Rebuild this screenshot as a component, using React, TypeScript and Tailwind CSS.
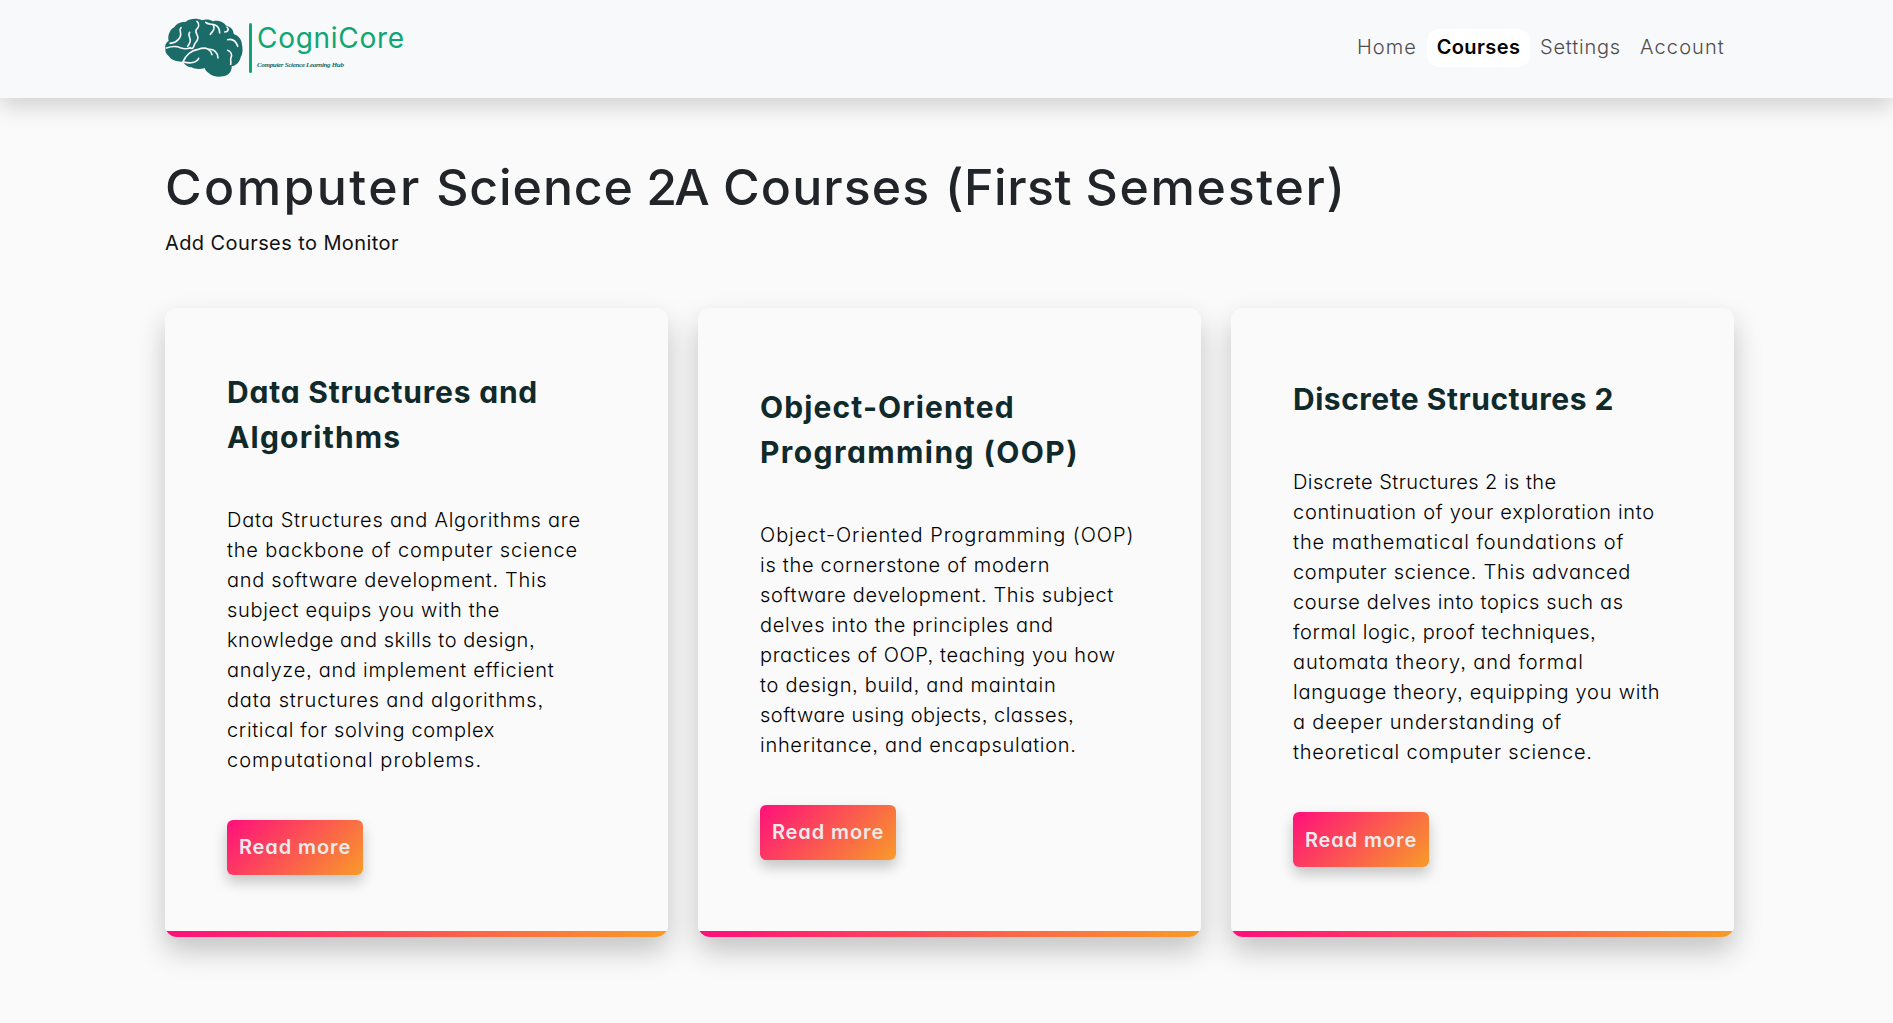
const FONT = "[font-family:Inter,'Open_Sans',sans-serif] [font-feature-settings:'cv11','ss03']";

type Line = { text: string; track: string };
type Course = { title: Line[]; body: Line[] };

const courses: Course[] = [
  {
    title: [
      { text: 'Data Structures and', track: 'tracking-[0.8px]' },
      { text: 'Algorithms', track: 'tracking-[1.2px]' },
    ],
    body: [
      { text: 'Data Structures and Algorithms are', track: 'tracking-[0.76px]' },
      { text: 'the backbone of computer science', track: 'tracking-[0.81px]' },
      { text: 'and software development. This', track: 'tracking-[0.67px]' },
      { text: 'subject equips you with the', track: 'tracking-[0.67px]' },
      { text: 'knowledge and skills to design,', track: 'tracking-[0.54px]' },
      { text: 'analyze, and implement efficient', track: 'tracking-[0.73px]' },
      { text: 'data structures and algorithms,', track: 'tracking-[0.82px]' },
      { text: 'critical for solving complex', track: 'tracking-[0.66px]' },
      { text: 'computational problems.', track: 'tracking-[1.04px]' },
    ],
  },
  {
    title: [
      { text: 'Object-Oriented', track: 'tracking-[1.12px]' },
      { text: 'Programming (OOP)', track: 'tracking-[1.43px]' },
    ],
    body: [
      { text: 'Object-Oriented Programming (OOP)', track: 'tracking-[0.95px]' },
      { text: 'is the cornerstone of modern', track: 'tracking-[0.72px]' },
      { text: 'software development. This subject', track: 'tracking-[0.65px]' },
      { text: 'delves into the principles and', track: 'tracking-[0.69px]' },
      { text: 'practices of OOP, teaching you how', track: 'tracking-[0.6px]' },
      { text: 'to design, build, and maintain', track: 'tracking-[0.71px]' },
      { text: 'software using objects, classes,', track: 'tracking-[0.5px]' },
      { text: 'inheritance, and encapsulation.', track: 'tracking-[0.72px]' },
    ],
  },
  {
    title: [{ text: 'Discrete Structures 2', track: 'tracking-[0.51px]' }],
    body: [
      { text: 'Discrete Structures 2 is the', track: 'tracking-[0.46px]' },
      { text: 'continuation of your exploration into', track: 'tracking-[0.71px]' },
      { text: 'the mathematical foundations of', track: 'tracking-[0.94px]' },
      { text: 'computer science. This advanced', track: 'tracking-[0.69px]' },
      { text: 'course delves into topics such as', track: 'tracking-[0.61px]' },
      { text: 'formal logic, proof techniques,', track: 'tracking-[0.61px]' },
      { text: 'automata theory, and formal', track: 'tracking-[0.92px]' },
      { text: 'language theory, equipping you with', track: 'tracking-[0.76px]' },
      { text: 'a deeper understanding of', track: 'tracking-[0.82px]' },
      { text: 'theoretical computer science.', track: 'tracking-[0.81px]' },
    ],
  },
];

function Brain() {
  return (
    <svg viewBox="30 31 234 180" className="h-[60px] w-[78px]" aria-hidden="true">
      <path
        fill="#1b6b68"
        d="M31 122C29 112 34 104 41 100C37 85 44 66 58 59C64 47 80 42 91 43C104 32 128 31 141 38C152 34 166 36 174 41C190 36 208 44 213 54C226 56 236 66 236 79C250 83 261 96 261 112C264 124 263 140 257 148C255 162 244 174 230 176C231 192 220 204 204 206C188 210 170 205 162 197C154 192 151 187 149 181C136 186 118 184 110 179C98 178 88 171 85 162C66 163 48 157 41 145C33 140 30 130 31 122Z"
      />
      <g fill="none" stroke="#f8f9fb" strokeWidth="4.8" strokeLinecap="round">
        <path d="M45 107C66 106 81 88 76 72C74 67 75 63 78 60" />
        <path d="M34 121C52 115 64 115 76 120C87 124 98 124 106 120" />
        <path d="M104 74C96 84 110 92 105 103C103 109 101 112 98 116" />
        <path d="M126 41C136 50 130 60 124 66C117 74 132 82 128 94C126 103 118 106 117 115C115 121 110 123 106 122" />
        <path d="M152 44C160 52 170 48 180 52C190 56 194 65 194 76" />
        <path d="M166 80C170 73 177 70 177 62C177 57 176 53 174 51" />
        <path d="M209 73C220 73 222 65 216 58" />
        <path d="M218 96C232 93 243 101 248 116" />
        <path d="M218 128C229 132 232 142 228 150C225 156 229 162 227 170" />
        <path d="M84 162C91 146 107 128 130 125C140 121 152 120 160 125C176 122 189 136 189 151" />
        <path d="M160 125C168 130 170 134 171 141" />
        <path d="M86 163C104 168 126 166 131 152" />
      </g>
    </svg>
  );
}

function Logo() {
  return (
    <a href="#" className="flex h-[60px] items-center">
      <Brain />
      <span className="ml-[6px] h-[50px] w-[3px] rounded-full bg-[#10a574]" />
      <span className="mb-[5px] ml-[5px] flex flex-col whitespace-nowrap">
        <span className="text-[28px] leading-[34px] tracking-[0.7px] text-[#0ea673]">CogniCore</span>
        <span className="mt-[5px] [font-family:'Liberation_Serif',serif] text-[7px] leading-[10px] font-bold tracking-[-0.32px] text-[#1b6b68] italic">
          Computer Science Learning Hub
        </span>
      </span>
    </a>
  );
}

function CourseCard({ title, body }: Course) {
  return (
    <article className="flex h-[629px] flex-col justify-center overflow-hidden rounded-xl bg-[linear-gradient(to_right,#ff0f7b,#f89b29)] bg-[length:100%_6px] bg-bottom bg-no-repeat shadow-[0_14px_28px_rgba(0,0,0,0.22)]">
      <div className="flex flex-1 flex-col items-start justify-center bg-[#fafafa] px-[62px] pt-[5px]">
        <h2 className="text-[30px] leading-[45px] font-bold whitespace-nowrap text-[#10292a]">
          {title.map((l) => (
            <span key={l.text} className={`block w-fit ${l.track}`}>{l.text}</span>
          ))}
        </h2>
        <p className="mt-[45px] text-xl leading-[30px] font-light whitespace-nowrap text-black">
          {body.map((l) => (
            <span key={l.text} className={`block w-fit ${l.track}`}>{l.text}</span>
          ))}
        </p>
        <button className="mt-[45px] h-[55px] w-[136px] rounded-md bg-[linear-gradient(135deg,#ff0f7b,#f89b29)] text-xl font-semibold tracking-[0.9px] whitespace-nowrap text-[#ebebeb] shadow-[0_7px_14px_rgba(0,0,0,0.22)]">
          Read more
        </button>
      </div>
      <div className="h-[6px]" />
    </article>
  );
}

export default function App() {
  return (
    <div className={`h-[1023px] overflow-hidden bg-[#fafafa] ${FONT}`}>
      <header className="h-[98px] bg-[#f8f9fb] shadow-[0_10px_20px_rgba(0,0,0,0.15)]">
        <div className="mx-auto flex w-[1569px] translate-x-[3px] items-start justify-between pt-[18px]">
          <Logo />
          <nav className="mt-[11px] flex text-xl leading-[37px] font-light whitespace-nowrap text-[#4d4d4e]">
            <a href="#" className="w-[80px] text-center tracking-[1.1px]">Home</a>
            <a href="#" className="h-[38px] w-[103px] rounded-xl bg-white text-center font-semibold tracking-[0.4px] text-black">Courses</a>
            <a href="#" className="w-[101px] text-center tracking-[0.8px]">Settings</a>
            <a href="#" className="w-[103px] text-center tracking-[1.1px]">Account</a>
          </nav>
        </div>
      </header>
      <main className="mx-auto w-[1569px] translate-x-[3px] pt-[59px]">
        <h1 className="text-[50px] leading-[60px] font-medium tracking-[1.12px] whitespace-nowrap text-[#212529]">
          <span className="tracking-[2.4px]">Computer</span> <span className="tracking-[0.9px]">Science</span>{' '}
          <span className="mr-[2px] ml-[-2px] tracking-[-3px]">2A</span> Courses{' '}
          <span className="mr-[-1px] tracking-[0.5px]">(First</span> <span className="tracking-[1.7px]">Semester)</span>
        </h1>
        <p className="mt-[11px] w-fit text-xl leading-[30px] tracking-[0.41px] text-[#111]">Add Courses to Monitor</p>
        <section className="mt-[50px] grid grid-cols-3 gap-[30px]">
          {courses.map((c) => (
            <CourseCard key={c.body[0].text} {...c} />
          ))}
        </section>
      </main>
    </div>
  );
}
